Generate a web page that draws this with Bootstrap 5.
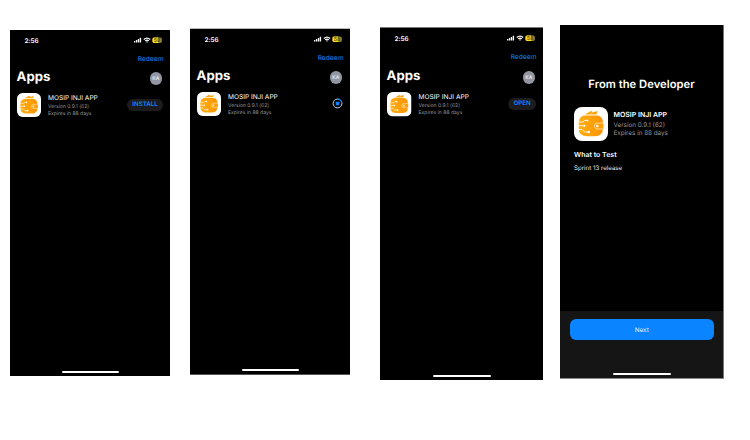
<!DOCTYPE html>
<html lang="en">
<head>
<meta charset="utf-8">
<title>TestFlight screens</title>
<link href="https://cdn.jsdelivr.net/npm/bootstrap@5.3.0/dist/css/bootstrap.min.css" rel="stylesheet">
<style>
body{width:750px;height:440px;overflow:hidden;background:#fff;font-family:Inter,"Liberation Sans",sans-serif;line-height:1;text-rendering:geometricPrecision}
.stage{height:440px;padding-left:10px}
.phone{width:160px;height:346px;background:#000;color:#fff;white-space:nowrap;flex:none}
.p1{margin-top:30px}
.p2{margin:28px 0 0 20px;height:347px;border-top:1px solid #bbb;border-bottom:1px solid #555}
.p3{margin:27px 0 0 30px;width:163px;height:353px;border-top:1px solid #777}
.p4{margin:25px 0 0 17px;width:164px;height:354px;border-right:1px solid #777;border-bottom:1px solid #888}
.status{height:20px;padding:0 8px 0 14.5px}
.clock{font-size:6.4px;font-weight:600;letter-spacing:-.02px;padding-top:1.5px}
.redeem{height:16px;padding:2px 6.5px 0 0;font-size:6.6px;color:#0a84f6;letter-spacing:.06px}
.heading{height:25px;padding:0 8px 0 6.5px}
.heading h1{font-size:13.2px;font-weight:700;margin:0 0 1px;letter-spacing:.05px}
.avatar{width:12.5px;height:12.5px;padding-top:1px;background:#9296a2;font-size:5px;font-weight:500;color:#f1f1f6}
.entry{padding:2px 7px 0}
.logo{width:24px;height:24px;display:block;flex:none}
.info{margin-left:7px;padding-top:1px}
.title{font-size:6.6px;line-height:9px;letter-spacing:-.03px}
.meta{font-size:5px;line-height:6.9px;color:#949499;letter-spacing:.01px;position:static}
.title + .meta{padding-top:.6px}
.pill{height:12.5px;margin-top:5.5px;padding-top:1.2px;background:#1c1c1e;color:#0a84ff;font-size:6.2px;font-weight:600}
.install{width:36px}
.open{width:28px}
.progress-ring{width:11px;height:11px;margin:5.5px .5px 0 0}
.home{width:57px;height:2.4px;border-radius:2px;background:#fff;margin-bottom:3px}
.p3 .redeem{height:17px;padding-top:1.5px}
.p3 .home{width:58px}
.p3 .meta{letter-spacing:.04px}
.p3 .title{letter-spacing:.03px}
.p3 .entry .logo{width:24.5px;height:24.5px}
.headline{margin:53px 0 0;font-size:11.2px;font-weight:600;line-height:13px;letter-spacing:.04px}
.build{margin:16px 0 0 14px}
.build .logo{width:34px;height:34px}
.build .info{margin-left:5.5px;padding-top:3px}
.build .title{font-size:7px;line-height:10px;font-weight:600;letter-spacing:-.02px}
.build .meta{font-size:6.2px;line-height:8.3px;letter-spacing:-.03px}
.build .title + .meta{padding-top:1px}
.build .meta{font-size:6.3px;letter-spacing:0}
.test-title{margin:9px 0 0 14px;font-size:7px;line-height:9px;font-weight:600}
.test-text{margin:6px 0 0 14px;font-size:6.1px;line-height:8px;color:#e8e8e8;letter-spacing:.02px}
.sheet{height:67.5px;background:#151515;padding:8.5px 9.5px 0 10px}
.next{height:21px;padding-top:1px;border-radius:6px;background:#0a84ff;color:#e4f1ff;font-size:6.3px}
.p4 .home{width:58px;margin-bottom:3px}
</style>
<script src="https://cdn.jsdelivr.net/npm/bootstrap@5.3.0/dist/js/bootstrap.bundle.min.js"></script>
</head>
<body>
<svg width="0" height="0" class="position-absolute">
<defs>
<symbol id="signals" viewBox="0 0 28 8">
<g fill="#fff"><rect x="0" y="4.9" width="1.4" height="1.7" rx=".3"/><rect x="1.9" y="4" width="1.4" height="2.6" rx=".3"/><rect x="3.8" y="2.9" width="1.4" height="3.7" rx=".3"/><rect x="5.7" y="1.7" width="1.4" height="4.9" rx=".3"/></g>
<g fill="none" stroke="#fff" stroke-width="1.15"><path d="M9.8 3.5Q13 .8 16.2 3.5"/><path d="M11.1 4.9Q13 3.3 14.9 4.9"/></g><path d="M12 5.7Q13 5 14 5.7L13 6.8Z" fill="#fff"/>
<rect x="18.5" y="1.4" width="9.3" height="5.5" rx="1.6" fill="#918735"/><path d="M20.1 1.4H24.2V6.9H20.1Q18.5 6.9 18.5 5.3V3Q18.5 1.4 20.1 1.4Z" fill="#ffdc1d"/>
<text x="23" y="5.9" text-anchor="middle" font-size="5" font-weight="600" fill="#5a4c09">58</text>
</symbol>
<symbol id="wallet" viewBox="0 0 34 34">
<defs><linearGradient id="amber" x1="0" x2="1"><stop offset="0" stop-color="#ffae12"/><stop offset="1" stop-color="#ff9400"/></linearGradient></defs>
<rect width="34" height="34" rx="8" fill="#fff"/>
<path d="M11 7.6L17 4L19 5.3L23.8 4.1L22.3 7.6Z" fill="#ffa40c"/><path d="M16 7.3L19 5.6" stroke="#fff" stroke-width=".3"/>
<path d="M10 8.4H24Q29 9.8 29 16V21Q29 29.2 21 29.2H13Q4.7 29.2 4.7 21V16Q4.7 9.8 10 8.4Z" fill="url(#amber)"/>
<g fill="none" stroke="#fff" stroke-width=".85"><path d="M4.7 15H9L10.5 13.5H12.5"/><path d="M4 18.8H9.5"/><path d="M4.7 22.5H8L10.5 25H14"/></g>
<g fill="#fff"><circle cx="13.3" cy="13.5" r="1.1"/><circle cx="10.3" cy="18.8" r="1.1"/><circle cx="14.8" cy="25" r="1.2"/></g>
<path d="M29.5 16H23Q20.4 16.2 20.4 19T23 22H29.5" fill="#ffa009" stroke="#fff" stroke-width=".6"/><circle cx="23.3" cy="19" r="1.2" fill="#fff"/>
</symbol>
</defs>
</svg>
<main class="stage d-flex align-items-start">
<section class="phone p1 d-flex flex-column">
<div class="status d-flex align-items-center justify-content-between"><span class="clock">2:56</span><svg width="28" height="8"><use href="#signals"/></svg></div>
<div class="redeem d-flex align-items-center justify-content-end">Redeem</div>
<div class="heading d-flex align-items-center justify-content-between"><h1>Apps</h1><span class="avatar rounded-circle d-flex align-items-center justify-content-center">KA</span></div>
<div class="entry d-flex align-items-start"><svg class="logo"><use href="#wallet"/></svg><div class="info"><div class="title">MOSIP INJI APP</div><div class="meta">Version 0.9.1 (62)</div><div class="meta">Expires in 88 days</div></div><div class="pill install rounded-pill ms-auto d-flex align-items-center justify-content-center">INSTALL</div></div>
<div class="home mt-auto align-self-center"></div>
</section>
<section class="phone p2 d-flex flex-column">
<div class="status d-flex align-items-center justify-content-between"><span class="clock">2:56</span><svg width="28" height="8"><use href="#signals"/></svg></div>
<div class="redeem d-flex align-items-center justify-content-end">Redeem</div>
<div class="heading d-flex align-items-center justify-content-between"><h1>Apps</h1><span class="avatar rounded-circle d-flex align-items-center justify-content-center">KA</span></div>
<div class="entry d-flex align-items-start"><svg class="logo"><use href="#wallet"/></svg><div class="info"><div class="title">MOSIP INJI APP</div><div class="meta">Version 0.9.1 (62)</div><div class="meta">Expires in 88 days</div></div><svg class="progress-ring ms-auto" viewBox="0 0 11 11"><circle cx="5.5" cy="5.5" r="4.4" fill="none" stroke="#c9d5e2" stroke-width="1"/><path d="M5.5 1.1A4.4 4.4 0 0 1 9.9 5.5" fill="none" stroke="#0a84ff" stroke-width="1.1"/><rect x="3.7" y="3.7" width="3.6" height="3.6" rx=".5" fill="#0a84ff"/></svg></div>
<div class="home mt-auto align-self-center"></div>
</section>
<section class="phone p3 d-flex flex-column">
<div class="status d-flex align-items-center justify-content-between"><span class="clock">2:56</span><svg width="28" height="8"><use href="#signals"/></svg></div>
<div class="redeem d-flex align-items-center justify-content-end">Redeem</div>
<div class="heading d-flex align-items-center justify-content-between"><h1>Apps</h1><span class="avatar rounded-circle d-flex align-items-center justify-content-center">KA</span></div>
<div class="entry d-flex align-items-start"><svg class="logo"><use href="#wallet"/></svg><div class="info"><div class="title">MOSIP INJI APP</div><div class="meta">Version 0.9.1 (62)</div><div class="meta">Expires in 88 days</div></div><div class="pill open rounded-pill ms-auto d-flex align-items-center justify-content-center">OPEN</div></div>
<div class="home mt-auto align-self-center"></div>
</section>
<section class="phone p4 d-flex flex-column">
<h2 class="headline text-center">From the Developer</h2>
<div class="build d-flex align-items-start"><svg class="logo"><use href="#wallet"/></svg><div class="info"><div class="title">MOSIP INJI APP</div><div class="meta">Version 0.9.1 (62)</div><div class="meta">Expires in 88 days</div></div></div>
<h3 class="test-title">What to Test</h3>
<p class="test-text">Sprint 13 release</p>
<div class="sheet mt-auto d-flex flex-column"><div class="next d-flex align-items-center justify-content-center">Next</div><div class="home mt-auto align-self-center"></div></div>
</section>
</main>
</body>
</html>
